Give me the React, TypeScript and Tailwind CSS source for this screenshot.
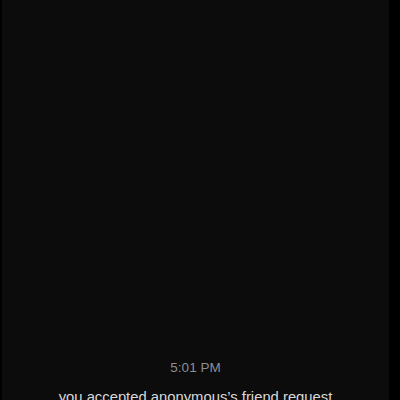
export default function App() {
  return (
    <div className="flex h-[400px] w-[400px] overflow-hidden bg-black font-['Liberation_Sans',Arial,sans-serif]">
      <div className="ml-[2px] flex h-full w-[387px] flex-col items-center bg-[#0c0c0c] pt-[359px]">
        <div className="text-[13.5px] leading-[17px] text-[#8e8e92]">5:01 PM</div>
        <div className="mt-[12px] text-[14.8px] leading-[18px] text-[#d9d9d9]">
          you accepted anonymous’s friend request
        </div>
        <div className="mt-4 h-10 shrink-0" />
      </div>
    </div>
  );
}
